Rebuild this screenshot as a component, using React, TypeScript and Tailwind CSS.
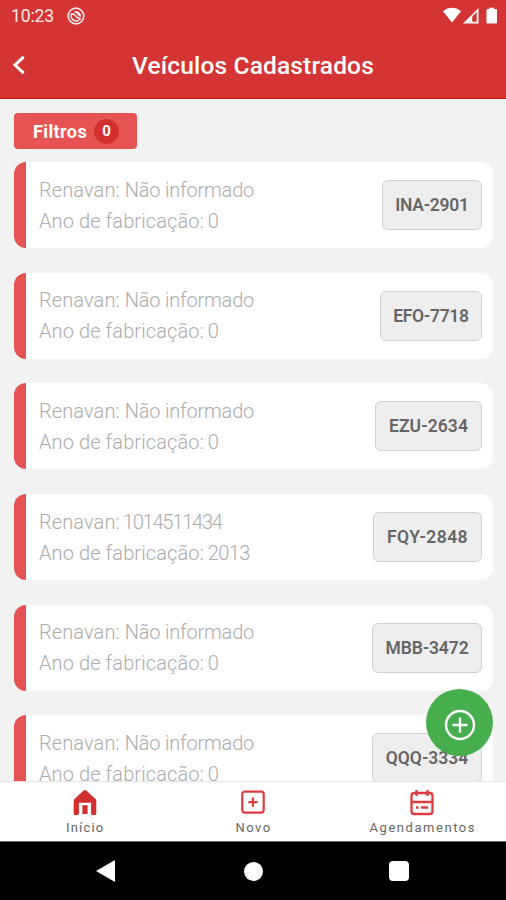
import React from "react";

type Vehicle = {
  plate: string;
  renavan: string;
  year: string;
  plateClass: string;
  renavanClass: string;
};

const vehicles: Vehicle[] = [
  { plate: "INA-2901", renavan: "Não informado", year: "0", plateClass: "w-[100px] tracking-[-0.25px]", renavanClass: "tracking-[-0.2px]" },
  { plate: "EFO-7718", renavan: "Não informado", year: "0", plateClass: "w-[102px] tracking-[-0.3px]", renavanClass: "tracking-[-0.2px]" },
  { plate: "EZU-2634", renavan: "Não informado", year: "0", plateClass: "w-[107px] tracking-[0.1px]", renavanClass: "tracking-[-0.2px]" },
  { plate: "FQY-2848", renavan: "1014511434", year: "2013", plateClass: "w-[109px] tracking-[0.4px]", renavanClass: "ml-[-2px] tracking-[-1.2px]" },
  { plate: "MBB-3472", renavan: "Não informado", year: "0", plateClass: "w-[110px] tracking-[-0.1px]", renavanClass: "tracking-[-0.2px]" },
  { plate: "QQQ-3334", renavan: "Não informado", year: "0", plateClass: "w-[110px] tracking-[0px]", renavanClass: "tracking-[-0.2px]" },
];

function StatusBar() {
  return (
    <div className="flex h-8 items-center justify-between pl-[11px] pr-2 text-white">
      <div className="flex items-center">
        <span className="w-[56px] pt-px text-[17.5px] leading-none tracking-[-0.1px] text-[#ffe9e9]">10:23</span>
        <svg width="18" height="18" viewBox="0 0 18 18" fill="none" stroke="#ffe9e9">
          <circle cx="9" cy="9" r="7.8" strokeWidth="1.7" />
          <path d="M5 6.2a4.9 4.9 0 1 0 8.2 5.4" strokeWidth="1.7" />
          <path d="M4.6 7.2q2-.8 3.3 1.2t5.6 3.4" strokeWidth="1.7" />
          <path d="M6.5 4.7a5 5 0 0 1 7.3 5.4q-2.4-.6-3.3-2.5T6.5 4.7z" fill="#ffe9e9" stroke="none" />
        </svg>
      </div>
      <svg width="55" height="18" viewBox="0 0 55 18" fill="white">
        <path d="M0 4.2C5.5-.3 12.5-.3 18 4.2L9 15.5z" />
        <path fillRule="evenodd" d="M20 16.5L35.5 1v15.5zM29.2 9.4v5.4h4.5V5z" />
        <path d="M46 2V.8h5V2h2q1 0 1 1v12.5q0 1-1 1h-8.5q-1 0-1-1V3q0-1 1-1z" />
      </svg>
    </div>
  );
}

function Header() {
  return (
    <header className="h-[99px] shrink-0 border-b-[1.5px] border-[#c91616] bg-[#d43434]">
      <StatusBar />
      <div className="grid h-[66px] grid-cols-[40px_1fr_40px] items-center">
        <button className="pl-3" aria-label="Voltar">
          <svg width="14" height="20" viewBox="0 0 14 20" fill="none" stroke="white" strokeWidth="3">
            <path d="M11.7 1.8L3 10l8.7 8.2" />
          </svg>
        </button>
        <h1 className="whitespace-nowrap pt-0.5 text-center text-[24.5px] font-medium leading-none tracking-[0.15px] text-white">
          Veículos Cadastrados
        </h1>
      </div>
    </header>
  );
}

function VehicleCard({ vehicle }: { vehicle: Vehicle }) {
  return (
    <div className="flex h-[86px] shrink-0 items-center justify-between overflow-hidden rounded-xl border-l-[12px] border-[#e65353] bg-white pl-[13px] pr-[11px]">
      <div className="whitespace-nowrap pt-px text-[20px] font-light leading-[31px] tracking-[0.1px] text-[#acacac]">
        <p>
          Renavan: <span className={vehicle.renavanClass}>{vehicle.renavan}</span>
        </p>
        <p>
          Ano de fabricação: <span className="ml-[-1px] tracking-[-0.6px]">{vehicle.year}</span>
        </p>
      </div>
      <div className={`flex h-[50px] items-center justify-center whitespace-nowrap rounded-md border border-[#d0d0d0] bg-[#eeeeee] text-[17.5px] font-semibold text-[#666] ${vehicle.plateClass}`}>
        {vehicle.plate}
      </div>
    </div>
  );
}

function TabBar() {
  return (
    <nav className="grid h-[60px] shrink-0 grid-cols-3 border-t border-[#e5e5e5] bg-white pl-px pt-[7px] text-[13px] leading-[18px] text-[#666]">
      <div className="flex flex-col items-center gap-[3px]">
        <svg width="24" height="27" viewBox="0 0 24 27" fill="#d32f2f">
          <path d="M10.7 1.5q1.3-1.1 2.6 0l9 8.2q1 .9 1 2.2v12.8q0 1.3-1.3 1.3h-2.6q-1.3 0-1.3-1.3V13.7H5.9v11q0 1.3-1.3 1.3H2Q.7 26 .7 24.7V11.9q0-1.3 1-2.2z" />
          <path d="M9.4 16.2h5.2V25H9.4z" />
        </svg>
        <span className="tracking-[1.2px]">Início</span>
      </div>
      <div className="flex flex-col items-center gap-[3px]">
        <svg width="24" height="27" viewBox="0 0 24 27" fill="none" stroke="#dc3c3f" strokeWidth="2.2">
          <rect x="1.3" y="2.6" width="21.4" height="21" rx="2.5" />
          <path d="M12 8.5v9.2M7.4 13.1h9.2" />
        </svg>
        <span className="tracking-[1.5px]">Novo</span>
      </div>
      <div className="flex flex-col items-center gap-[3px]">
        <svg width="24" height="27" viewBox="0 0 24 27" fill="none" stroke="#dc3c3f" strokeWidth="2.3">
          <rect x="1.5" y="4" width="21" height="21" rx="2.8" />
          <path d="M2 13h20M6.5 1v6M17.5 1v6M6 18.5h2.5M11 18.5h7" />
        </svg>
        <span className="pl-0.5 tracking-[1.55px]">Agendamentos</span>
      </div>
    </nav>
  );
}

function SystemNav() {
  return (
    <div className="flex h-[59px] shrink-0 items-center justify-between border-t border-[#666] bg-black pl-[96px] pr-[97px]">
      <svg width="19" height="22" viewBox="0 0 19 22" fill="white">
        <path d="M0 11L19 0v22z" />
      </svg>
      <div className="ml-0.5 size-[19px] rounded-full bg-white" />
      <div className="size-5 rounded-sm bg-white" />
    </div>
  );
}

function App() {
  return (
    <div className="relative flex h-[900px] w-[506px] flex-col overflow-hidden bg-[#f2f2f2] font-['Roboto',sans-serif]">
      <Header />
      <main className="flex h-[682px] shrink-0 flex-col overflow-hidden pl-[14px] pr-[13px] pt-[14px]">
        <button className="mb-[13.2px] flex h-9 w-[123px] shrink-0 items-center gap-[7px] rounded bg-[#e65353] pl-[19px] text-[18px] font-bold text-white">
          <span className="w-[54px] whitespace-nowrap text-left tracking-[0.4px]">Filtros</span>
          <span className="flex size-[25px] items-center justify-center rounded-full bg-[#d32f2f] pt-px text-[15px]">0</span>
        </button>
        <div className="flex flex-col gap-[24.65px]">
          {vehicles.map((vehicle) => (
            <VehicleCard key={vehicle.plate} vehicle={vehicle} />
          ))}
        </div>
      </main>
      <TabBar />
      <SystemNav />
      <button className="absolute left-[426px] top-[689px] flex size-[67px] items-center justify-center rounded-full bg-[#47ae4d]" aria-label="Adicionar">
        <svg className="mt-1" width="32" height="32" viewBox="0 0 32 32" fill="none" stroke="white" strokeWidth="2.4">
          <circle cx="16" cy="16" r="14" />
          <path d="M16 8.5v15M8.5 16h15" />
        </svg>
      </button>
    </div>
  );
}

export default App;
